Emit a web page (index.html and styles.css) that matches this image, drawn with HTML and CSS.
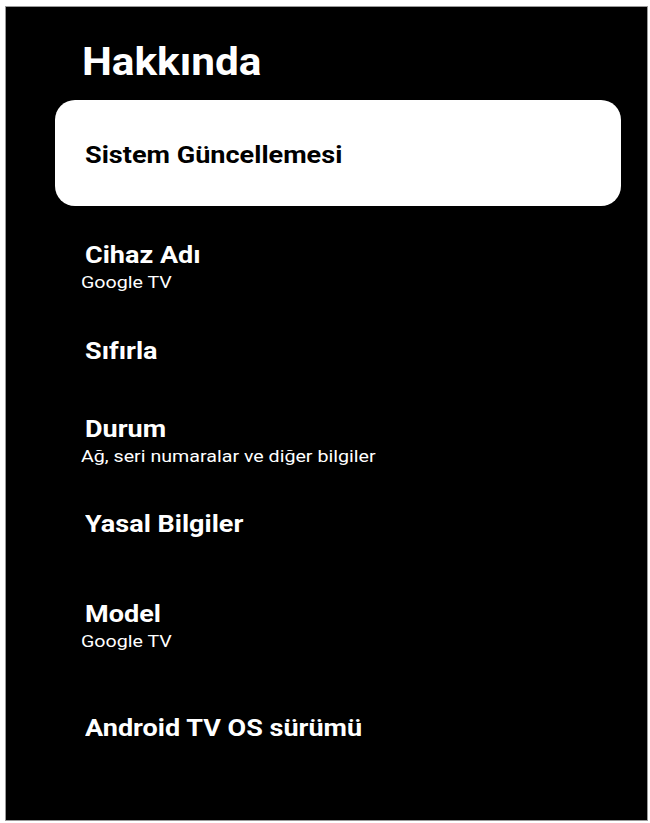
FILE: index.html
```html
<!DOCTYPE html>
<html lang="tr">
<head>
<meta charset="utf-8">
<title>Hakkında</title>
<link rel="stylesheet" href="styles.css">
</head>
<body>
<div class="panel">
  <h1 class="title">Hakkında</h1>
  <div class="list">
    <div class="card">
      <span class="card-label">Sistem Güncellemesi</span>
    </div>
    <div class="row row-a">
      <div class="row-title">Cihaz Adı</div>
      <div class="row-sub">Google TV</div>
    </div>
    <div class="row row-b">
      <div class="row-title">Sıfırla</div>
    </div>
    <div class="row row-c">
      <div class="row-title">Durum</div>
      <div class="row-sub">Ağ, seri numaralar ve diğer bilgiler</div>
    </div>
    <div class="row row-d">
      <div class="row-title">Yasal Bilgiler</div>
    </div>
    <div class="row row-e">
      <div class="row-title">Model</div>
      <div class="row-sub">Google TV</div>
    </div>
    <div class="row row-e">
      <div class="row-title">Android TV OS sürümü</div>
    </div>
  </div>
</div>
</body>
</html>
```

FILE: styles.css
```css
html, body {
  margin: 0;
  padding: 0;
  background: #ffffff;
}

body {
  font-family: Roboto, "Liberation Sans", Arial, sans-serif;
  width: 650px;
  height: 823px;
  overflow: hidden;
}

.panel {
  box-sizing: border-box;
  margin: 6px 0 0 5px;
  width: 643px;
  height: 815px;
  background: #000000;
  border: 1px solid #9a9a9a;
  color: #ffffff;
  overflow: hidden;
}

.title {
  width: fit-content;
  margin: 33px 0 0 76px;
  font-size: 38px;
  line-height: 44px;
  font-weight: 700;
  letter-spacing: 0;
  transform: scaleX(1.113);
  transform-origin: left center;
}

.list {
  margin: 16px 0 0 49px;
  width: 566px;
  display: flex;
  flex-direction: column;
}

.card {
  box-sizing: border-box;
  height: 106px;
  border-radius: 20px;
  background: #ffffff;
  color: #000000;
  display: flex;
  align-items: center;
  padding: 0 0 0 30px;
}

.card-label {
  display: block;
  font-size: 24px;
  font-weight: 700;
  line-height: 28px;
  margin-top: 4px;
  transform: scaleX(1.128);
  transform-origin: left center;
}

.row {
  padding-left: 30px;
}

.row-title {
  width: fit-content;
  font-size: 23px;
  line-height: 28px;
  font-weight: 700;
  transform: scaleX(1.175);
  transform-origin: left center;
}

.row-sub {
  width: fit-content;
  font-size: 17px;
  line-height: 24px;
  font-weight: 400;
  margin-left: -4px;
  transform: scaleX(1.155);
  transform-origin: left center;
}

.row-a { margin-top: 36px; }
.row-b { margin-top: 44px; }
.row-c { margin-top: 50px; }
.row-d { margin-top: 43px; }
.row-e { margin-top: 62px; }
```
